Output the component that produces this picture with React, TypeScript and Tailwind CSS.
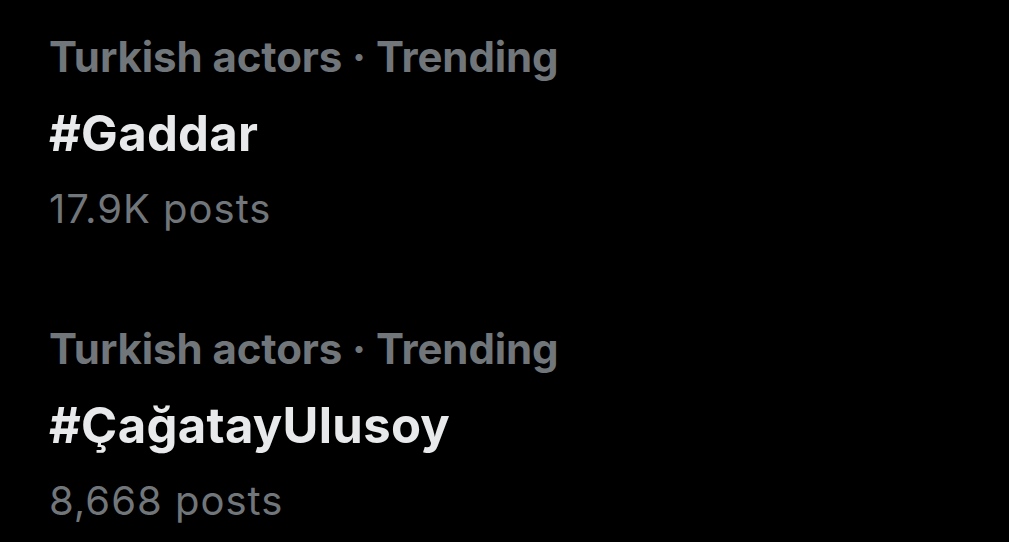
import React from 'react';

const trends = [
  { context: 'Turkish actors · Trending', tag: '#Gaddar', posts: '17.9K posts' },
  { context: 'Turkish actors · Trending', tag: '#ÇağatayUlusoy', posts: '8,668 posts' },
];

export default function App() {
  return (
    <div
      className="w-[1009px] h-[542px] overflow-hidden bg-black pl-[49px] pt-[18px]"
      style={{ fontFamily: 'Inter, "Noto Sans", sans-serif' }}
    >
      <div className="flex flex-col gap-[66px]">
        {trends.map((t, i) => (
          <div key={i} className="flex flex-col">
            <div className="text-[42px] leading-[77px] font-bold text-[#71767b] tracking-[-0.1px]">{t.context}</div>
            <div className="text-[49px] leading-[78px] font-bold text-[#e7e9ea] tracking-[0.3px]">{t.tag}</div>
            <div className="text-[40px] leading-[71px] text-[#71767b] tracking-[1px]">{t.posts}</div>
          </div>
        ))}
      </div>
    </div>
  );
}
